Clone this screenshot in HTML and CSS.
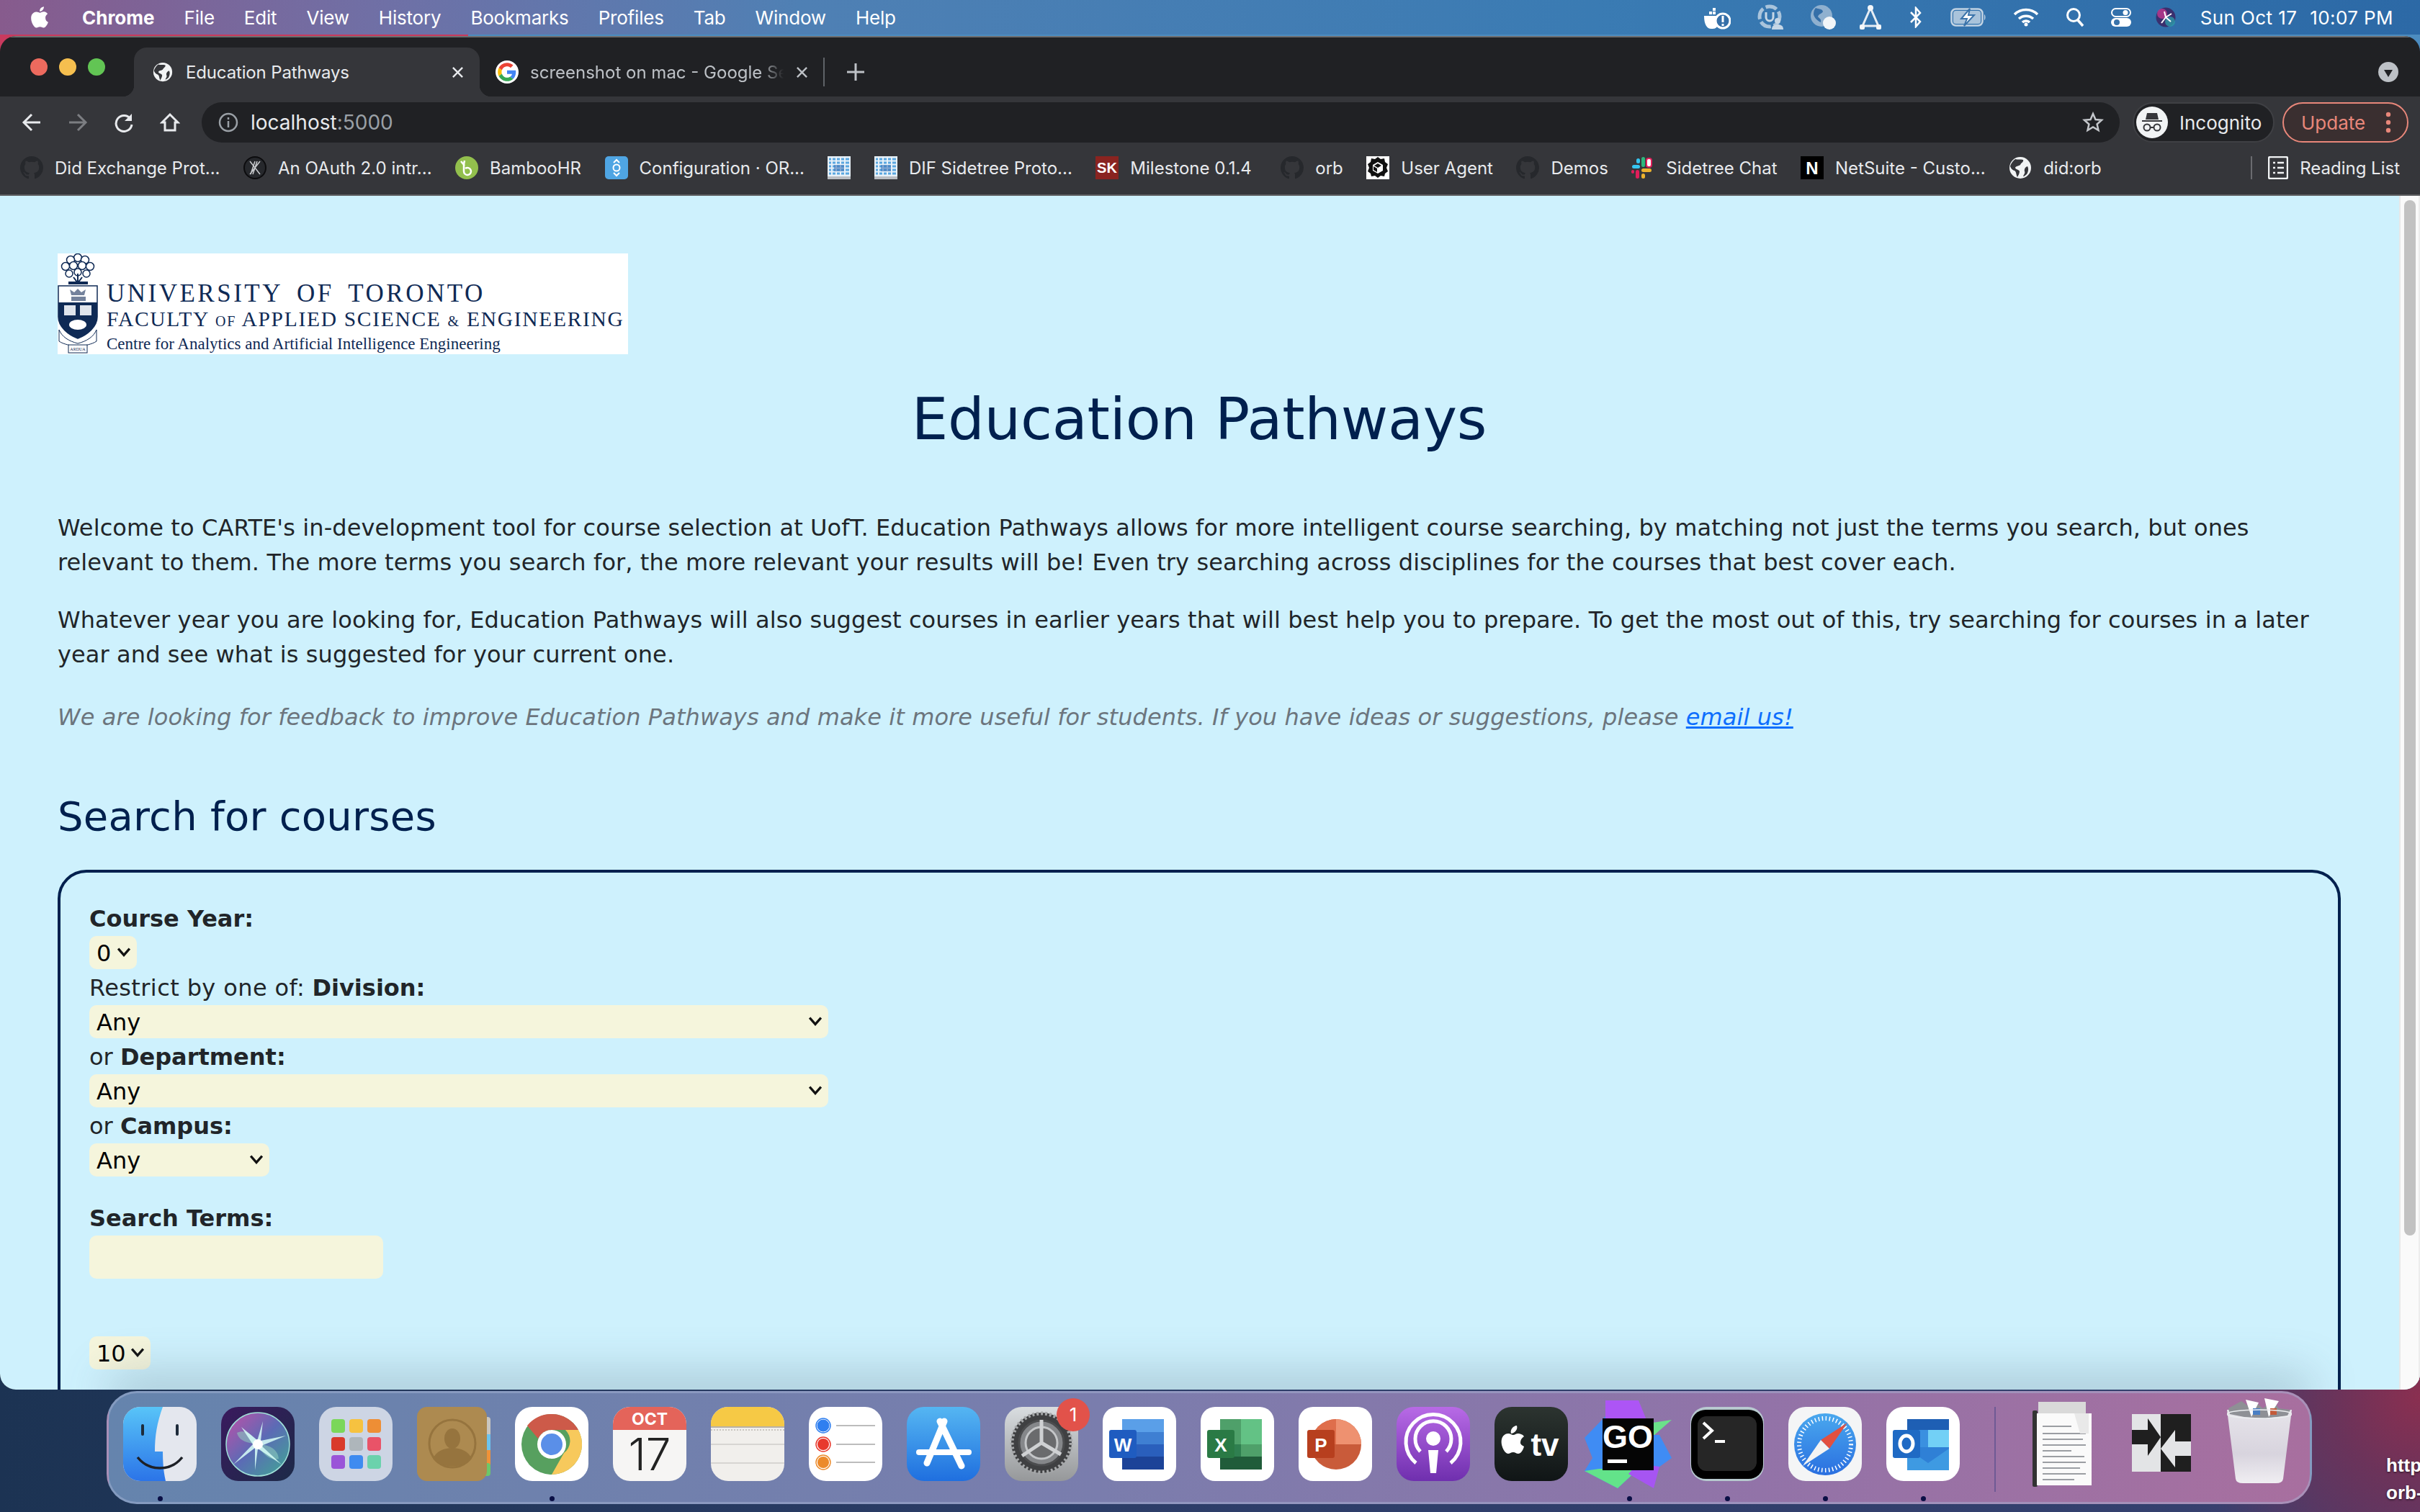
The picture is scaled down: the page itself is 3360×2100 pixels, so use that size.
FILE: index.html
```html
<!DOCTYPE html>
<html lang="en">
<head>
  <title>Education Pathways</title>
  <link rel="stylesheet" href="styles.css">
</head>
<body>
  <svg class="defs" width="0" height="0">
    <defs>
      <symbol id="octo" viewBox="0 0 16 16"><path d="M8 0C3.58 0 0 3.58 0 8c0 3.54 2.29 6.53 5.47 7.59.4.07.55-.17.55-.38 0-.19-.01-.82-.01-1.49-2.01.37-2.53-.49-2.69-.94-.09-.23-.48-.94-.82-1.13-.28-.15-.68-.52-.01-.53.63-.01 1.08.58 1.23.82.72 1.21 1.87.87 2.33.66.07-.52.28-.87.51-1.07-1.78-.2-3.64-.89-3.64-3.95 0-.87.31-1.59.82-2.15-.08-.2-.36-1.02.08-2.12 0 0 .67-.21 2.2.82.64-.18 1.32-.27 2-.27.68 0 1.36.09 2 .27 1.53-1.04 2.2-.82 2.2-.82.44 1.1.16 1.92.08 2.12.51.56.82 1.27.82 2.15 0 3.07-1.87 3.75-3.65 3.95.29.25.54.73.54 1.48 0 1.07-.01 1.93-.01 2.2 0 .21.15.46.55.38A8.013 8.013 0 0016 8c0-4.42-3.58-8-8-8z" fill="#26282c"/></symbol>
      <symbol id="globe" viewBox="0 0 32 32"><circle cx="16" cy="16" r="15" fill="#f1f3f4"/><path d="M9 4c3 1 8 0 11 1 1 3-3 4-4 7-2 2-6 1-7 4 1 3 5 2 6 5 0 3-2 6-3 8-2-3-1-7-4-9-3-1-5-3-6-6 1-4 4-8 7-10zM26 14c2 3 1 8-1 11-2 1-3 3-5 3 1-3 3-4 2-7-1-3 1-6 4-7z" fill="#35363a"/></symbol>
      <symbol id="sheet" viewBox="0 0 32 32"><rect width="32" height="32" fill="#e8f1f8"/><path d="M2 4h28M2 9h28M2 14h28M2 19h28M2 24h28" stroke="#5aa7e0" stroke-width="3"/><path d="M6 0v28M12 0v28M18 0v28M24 0v28" stroke="#e8f1f8" stroke-width="2"/><rect x="9" y="12" width="14" height="9" fill="#3d74b8" opacity=".6"/><rect y="28" width="32" height="4" fill="#b9bdc2"/></symbol>
      <linearGradient id="siriBg" x1="0" y1="0" x2="1" y2="1"><stop offset="0" stop-color="#3a1a5e"/><stop offset="1" stop-color="#1c2a48"/></linearGradient>
      <linearGradient id="siriBall" x1="0" y1="0" x2="1" y2="1"><stop offset="0" stop-color="#c24fa8"/><stop offset=".5" stop-color="#5b6bb5"/><stop offset="1" stop-color="#3fa893"/></linearGradient>
      <linearGradient id="finderL" x1="0" y1="0" x2="0" y2="1"><stop offset="0" stop-color="#58c4f8"/><stop offset="1" stop-color="#2b74e8"/></linearGradient>
      <linearGradient id="storeBg" x1="0" y1="0" x2="0" y2="1"><stop offset="0" stop-color="#55b6f2"/><stop offset="1" stop-color="#1f6fdf"/></linearGradient>
      <linearGradient id="gearBg" x1="0" y1="0" x2="0" y2="1"><stop offset="0" stop-color="#d9dde0"/><stop offset="1" stop-color="#96989a"/></linearGradient>
      <linearGradient id="podBg" x1="0" y1="0" x2="0" y2="1"><stop offset="0" stop-color="#b86ae6"/><stop offset="1" stop-color="#6f2fae"/></linearGradient>
      <linearGradient id="tvBg" x1="0" y1="0" x2="0" y2="1"><stop offset="0" stop-color="#2c3430"/><stop offset="1" stop-color="#101516"/></linearGradient>
      <linearGradient id="binBg" x1="0" y1="0" x2="0" y2="1"><stop offset="0" stop-color="#e6e4ea"/><stop offset=".6" stop-color="#d8d4de"/><stop offset="1" stop-color="#f0eef2"/></linearGradient>
      <linearGradient id="safariBg" x1="0" y1="0" x2="0" y2="1"><stop offset="0" stop-color="#4aa8ee"/><stop offset="1" stop-color="#2a6fe0"/></linearGradient>
    </defs>
  </svg>

  <!-- mac menu bar -->
  <header class="menubar">
    <nav class="menus">
      <svg class="apple" viewBox="0 0 24 28"><path d="M17 14.6c0-3 2.500-4.400 2.600-4.500-1.400-2.100-3.600-2.400-4.400-2.400-1.900-.2-3.600 1.100-4.600 1.100-.9 0-2.400-1.100-4-1-2 0-3.900 1.200-5 3-2.100 3.700-.5 9.200 1.500 12.200 1 1.500 2.200 3.100 3.800 3 1.500-.1 2.100-1 3.900-1 1.800 0 2.400 1 4 1 1.600 0 2.700-1.500 3.700-3 1.200-1.700 1.600-3.300 1.700-3.400-.1 0-3.200-1.200-3.200-5z M14 5.600c.8-1 1.400-2.400 1.200-3.800-1.200.1-2.600.8-3.500 1.800-.8.9-1.400 2.300-1.200 3.700 1.300.1 2.700-.7 3.500-1.700z" fill="#fff"/></svg>
      <b>Chrome</b>
      <span>File</span><span>Edit</span><span>View</span><span>History</span><span>Bookmarks</span><span>Profiles</span><span>Tab</span><span>Window</span><span>Help</span>
    </nav>
    <div class="status">
      <svg class="st st-docker" viewBox="0 0 38 36"><path d="M1 16h20c0 8 0 12-2 15-2 3-5 3-8 3-6 0-10-6-10-18zM8 10h4v4H8zM13 10h4v4h-4zM13 5h4v4h-4z" fill="#fff"/><circle cx="27" cy="23" r="10" fill="#356fa8" stroke="#fff" stroke-width="3"/><path d="M27 16v9M27 27v3" stroke="#fff" stroke-width="3"/></svg>
      <svg class="st st-up" viewBox="0 0 36 36"><circle cx="17" cy="17" r="14" fill="none" stroke="#a9c4dc" stroke-width="5" stroke-dasharray="16 4"/><path d="M12 11v7a5 5 0 0 0 10 0v-7" fill="none" stroke="#c6d7e6" stroke-width="3"/><circle cx="28" cy="23" r="4" fill="#c6d7e6"/><path d="M20 35c0-5 3-7 8-7s8 2 8 7z" fill="#c6d7e6"/></svg>
      <svg class="st st-net" viewBox="0 0 36 36"><circle cx="16" cy="16" r="15" fill="#8fb0cf"/><path d="M8 5c5 2 9 1 10 5-1 3-6 3-7 7 2 3 5 3 4 8-4-2-9-6-10-11 0-4 1-7 3-9z" fill="#356fa8"/><circle cx="27" cy="26" r="9" fill="#f2f5f8"/></svg>
      <svg class="st st-tri" viewBox="0 0 32 36"><path d="M16 5 5 30h22z" fill="none" stroke="#e6edf4" stroke-width="3"/><circle cx="16" cy="5" r="4" fill="#f4f7fa"/><rect x="1" y="28" width="7" height="7" rx="2" fill="#f4f7fa"/><rect x="24" y="28" width="7" height="7" rx="2" fill="#f4f7fa"/></svg>
      <svg class="st st-bt" viewBox="0 0 18 30"><path d="M2 8l13 13-6 7V2l6 7L2 22" fill="none" stroke="#fff" stroke-width="2.500"/></svg>
      <svg class="st st-batt" viewBox="0 0 50 26"><rect x="1.500" y="1.500" width="43" height="23" rx="6" fill="none" stroke="#c2d3e3" stroke-width="2.500"/><rect x="4" y="4" width="38" height="18" rx="3.500" fill="#a9c3db"/><path d="M47 9c2 1 2 7 0 8z" fill="#c2d3e3"/><path d="M27 1 15 15h8l-4 10 14-15h-8z" fill="#fff" stroke="#3a73aa" stroke-width="2"/></svg>
      <svg class="st st-wifi" viewBox="0 0 36 26"><path d="M2 9a23 23 0 0 1 32 0M8 15a15 15 0 0 1 20 0M13 20a7 7 0 0 1 10 0" fill="none" stroke="#fff" stroke-width="3.500"/><circle cx="18" cy="23" r="2.500" fill="#fff"/></svg>
      <svg class="st st-find" viewBox="0 0 26 28"><circle cx="11" cy="11" r="8.500" fill="none" stroke="#fff" stroke-width="3"/><path d="M17 18l7 8" stroke="#fff" stroke-width="3.500"/></svg>
      <svg class="st st-cc" viewBox="0 0 28 26"><rect x="1" y="1" width="26" height="11" rx="5.500" fill="none" stroke="#fff" stroke-width="2"/><circle cx="20" cy="6.500" r="3.500" fill="#fff"/><rect x="0" y="14" width="28" height="12" rx="6" fill="#fff"/><circle cx="8" cy="20" r="4" fill="#3a73aa"/></svg>
      <svg class="st st-siri" viewBox="0 0 28 28"><circle cx="14" cy="14" r="13.500" fill="#3a2f6e"/><circle cx="9" cy="9" r="7" fill="#c0398f" opacity=".8"/><circle cx="20" cy="20" r="7" fill="#2e9aa8" opacity=".8"/><path d="M14 14 8 22M14 14l8-5M14 14 12 6M14 14l7 6" stroke="#fff" stroke-width="2"/></svg>
      <span class="clock">Sun Oct 17</span>
      <span class="clock clock-time">10:07 PM</span>
    </div>
  </header>

  <!-- chrome window -->
  <main class="window">
    <div class="tabstrip">
      <div class="lights"><i class="red"></i><i class="yellow"></i><i class="green"></i></div>
      <div class="tab tab-active">
        <svg class="fav"><use href="#globe"/></svg>
        <span class="tab-title">Education Pathways</span>
        <svg class="tab-x" viewBox="0 0 18 18"><path d="M2 2l14 14M16 2 2 16" stroke="#e8eaed" stroke-width="2.500"/></svg>
      </div>
      <div class="tab tab-back">
        <svg class="fav" viewBox="-6 -6 60 60"><circle cx="24" cy="24" r="30" fill="#fff"/><path fill="#EA4335" d="M24 9.500c3.540 0 6.710 1.220 9.210 3.600l6.850-6.850C35.900 2.380 30.470 0 24 0 14.620 0 6.510 5.380 2.560 13.220l7.980 6.190C12.430 13.720 17.740 9.500 24 9.500z"/><path fill="#4285F4" d="M46.980 24.550c0-1.570-.15-3.090-.38-4.550H24v9.020h12.940c-.58 2.960-2.260 5.480-4.780 7.180l7.730 6c4.510-4.180 7.090-10.360 7.090-17.650z"/><path fill="#FBBC05" d="M10.530 28.590c-.48-1.450-.76-2.990-.76-4.590s.27-3.140.76-4.590l-7.980-6.190C.92 16.460 0 20.120 0 24c0 3.880.92 7.540 2.560 10.780l7.970-6.190z"/><path fill="#34A853" d="M24 48c6.480 0 11.930-2.130 15.890-5.810l-7.730-6c-2.150 1.450-4.920 2.300-8.160 2.300-6.260 0-11.570-4.220-13.470-9.910l-7.980 6.190C6.510 42.620 14.620 48 24 48z"/></svg>
        <span class="tab-title tab-fade">screenshot on mac - Google Se</span>
        <svg class="tab-x" viewBox="0 0 18 18"><path d="M2 2l14 14M16 2 2 16" stroke="#bdc1c6" stroke-width="2.500"/></svg>
      </div>
      <i class="tab-sep"></i>
      <svg class="plus" viewBox="0 0 24 24"><path d="M12 0v24M0 12h24" stroke="#bdc1c6" stroke-width="3"/></svg>
      <span class="tab-list"><svg viewBox="0 0 28 28"><circle cx="14" cy="14" r="14" fill="#bdc1c6"/><path d="M8 11h12l-6 10z" fill="#202124"/></svg></span>
    </div>

    <div class="toolbar">
      <svg class="nav" viewBox="0 0 28 28"><path d="M26 14H4M14 3 3 14l11 11" fill="none" stroke="#e8eaed" stroke-width="3"/></svg>
      <svg class="nav" viewBox="0 0 28 28"><path d="M2 14h22M14 3l11 11-11 11" fill="none" stroke="#7c7e82" stroke-width="3"/></svg>
      <svg class="nav" viewBox="0 0 28 28"><path d="M23 9a11 11 0 1 0 2 8" fill="none" stroke="#e8eaed" stroke-width="3"/><path d="M25 2v10H15z" fill="#e8eaed"/></svg>
      <svg class="nav" viewBox="0 0 28 28"><path d="M14 3 3 14h4v11h14V14h4z" fill="none" stroke="#e8eaed" stroke-width="3"/></svg>
      <div class="omnibox">
        <svg class="info" viewBox="0 0 28 28"><circle cx="14" cy="14" r="12" fill="none" stroke="#9aa0a6" stroke-width="2.500"/><path d="M14 12v9M14 7v3" stroke="#9aa0a6" stroke-width="2.500"/></svg>
        <span class="url">localhost<span class="url-port">:5000</span></span>
        <svg class="star" viewBox="0 0 30 30"><path d="M15 3l3.500 8 8.500.8-6.400 5.700 1.900 8.500L15 21.500 7.500 26l1.900-8.500L3 11.800l8.500-.8z" fill="none" stroke="#c4c7cb" stroke-width="2.500"/></svg>
      </div>
      <div class="incognito">
        <svg class="avatar" viewBox="0 0 44 44"><circle cx="22" cy="22" r="22" fill="#f1f3f4"/><path d="M15 9h14l2 9H13zM8 19h28v2H8z" fill="#35363a"/><circle cx="15" cy="29" r="4.500" fill="none" stroke="#35363a" stroke-width="2"/><circle cx="29" cy="29" r="4.500" fill="none" stroke="#35363a" stroke-width="2"/><path d="M19 29h6" stroke="#35363a" stroke-width="2"/></svg>
        <span>Incognito</span>
      </div>
      <div class="update">
        <span>Update</span>
        <svg class="dots" viewBox="0 0 8 30"><circle cx="4" cy="4" r="3.200"/><circle cx="4" cy="15" r="3.200"/><circle cx="4" cy="26" r="3.200"/></svg>
      </div>
    </div>

    <div class="bookmarks">
      <a class="mark"><svg><use href="#octo"/></svg>Did Exchange Prot...</a>
      <a class="mark"><svg viewBox="0 0 32 32"><circle cx="16" cy="16" r="15" fill="#26282c" stroke="#0c0c0e" stroke-width="2"/><path d="M9 7l14 18M16 7l-6 18M19 7l-6 18M23 7 9 25" stroke="#c9cbce" stroke-width="1.500"/></svg>An OAuth 2.0 intr...</a>
      <a class="mark"><svg viewBox="0 0 32 32"><circle cx="16" cy="16" r="16" fill="#92bf4d"/><path d="M12 12v9a5 5 0 1 0 2-4M8 7l5 6M13 6l-1 5" fill="none" stroke="#fff" stroke-width="2.500"/></svg>BambooHR</a>
      <a class="mark"><svg viewBox="0 0 32 32"><rect width="32" height="32" rx="5" fill="#4fa5e3"/><circle cx="16" cy="16" r="4.500" fill="none" stroke="#fff" stroke-width="2"/><path d="M12 9l4-4 4 4M12 23l4 4 4-4" fill="none" stroke="#fff" stroke-width="2"/></svg>Configuration · OR...</a>
      <a class="mark"><svg><use href="#sheet"/></svg></a>
      <a class="mark"><svg><use href="#sheet"/></svg>DIF Sidetree Proto...</a>
      <a class="mark"><svg viewBox="0 0 32 32"><rect width="32" height="32" fill="#8a2420"/><text x="16" y="23" class="sk">SK</text></svg>Milestone 0.1.4</a>
      <a class="mark mark-wide"><svg><use href="#octo"/></svg>orb</a>
      <a class="mark"><svg viewBox="0 0 32 32"><rect width="32" height="32" fill="#fff"/><path d="M16 1l4 3 5-1 1 5 4 3-2 5 2 5-4 3-1 4-5-1-4 3-4-3-5 1-1-4-4-3 2-5-2-5 4-3 1-5 5 1z" fill="#111"/><path d="M16 8l7 4v8l-7 4-7-4v-8z" fill="#fff"/><path d="M16 10l5 3-5 3-5-3zM15 17v5l-5-3v-5z" fill="#111"/></svg>User Agent</a>
      <a class="mark"><svg><use href="#octo"/></svg>Demos</a>
      <a class="mark"><svg viewBox="0 0 32 32"><rect x="1" y="12" width="11" height="5" rx="2.500" fill="#36c5f0"/><rect x="7" y="3" width="5" height="7" rx="2.500" fill="#36c5f0"/><rect x="14" y="1" width="5" height="14" rx="2.500" fill="#2eb67d"/><rect x="21" y="3" width="7" height="12" rx="3" fill="#fff" stroke="#e01e5a" stroke-width="2"/><rect x="14" y="17" width="14" height="5" rx="2.500" fill="#ecb22e"/><rect x="14" y="24" width="5" height="7" rx="2.500" fill="#ecb22e"/><rect x="6" y="19" width="5" height="12" rx="2.500" fill="#e01e5a"/><rect x="0" y="19" width="4" height="5" rx="2" fill="#e01e5a"/></svg>Sidetree Chat</a>
      <a class="mark"><svg viewBox="0 0 32 32"><rect width="32" height="32" fill="#000"/><text x="16" y="25" class="nt">N</text></svg>NetSuite - Custo...</a>
      <a class="mark"><svg><use href="#globe"/></svg>did:orb</a>
      <i class="mark-sep"></i>
      <a class="mark reading"><svg viewBox="0 0 28 32"><rect x="1" y="1" width="26" height="30" rx="2" fill="#35363a" stroke="#f1f3f4" stroke-width="2.500"/><path d="M7 9h3M7 16h3M7 23h3M13 9h9M13 16h9M13 23h9" stroke="#f1f3f4" stroke-width="2.500"/></svg>Reading List</a>
    </div>

    <div class="viewport">
      <div class="page">
        <div class="logo">
          <svg class="crest" viewBox="0 0 58 140">
            <g fill="#fff" stroke="#0f2a55" stroke-width="1.500">
              <circle cx="28" cy="6" r="5.500"/><circle cx="18" cy="9" r="5.500"/><circle cx="38" cy="9" r="5.500"/><circle cx="11" cy="18" r="5.500"/><circle cx="22" cy="17" r="5.500"/><circle cx="34" cy="17" r="5.500"/><circle cx="45" cy="18" r="5.500"/><circle cx="16" cy="28" r="5"/><circle cx="28" cy="26" r="5"/><circle cx="40" cy="28" r="5"/>
            </g>
            <path d="M28 28v12M22 33l6 8 6-8" stroke="#0f2a55" stroke-width="2" fill="none"/>
            <rect x="15" y="39" width="27" height="4" fill="#0f2a55"/>
            <path d="M1 45h54v43c0 14-14 25-27 30C15 113 1 102 1 88z" fill="#fff" stroke="#0f2a55" stroke-width="1.500"/>
            <path d="M1 68h54v20c0 14-14 25-27 30C15 113 1 102 1 88z" fill="#0f2a55"/>
            <path d="M19 58l-2-8 6 4 5-5 5 5 6-4-2 8zM19 60h20v6H19z" fill="#74829c"/>
            <rect x="9" y="72" width="16" height="14" fill="#dfe4ec"/><rect x="31" y="72" width="16" height="14" fill="#dfe4ec"/>
            <ellipse cx="28" cy="99" rx="12" ry="7" fill="#fff"/>
            <path d="M2 106c4 10 14 16 26 19 12-3 22-9 26-19v16c-6 4-16 6-26 8-10-2-20-4-26-8z" fill="#fff" stroke="#0f2a55"/>
            <rect x="15" y="127" width="26" height="11" fill="#fff" stroke="#0f2a55"/>
            <text x="28" y="135" class="crest-motto">ARDUA</text>
          </svg>
          <div class="logo-text">
            <div class="logo-uni">UNIVERSITY OF TORONTO</div>
            <div class="logo-fac">FACULTY <small>OF</small> APPLIED SCIENCE <small>&amp;</small> ENGINEERING</div>
            <div class="logo-cen">Centre for Analytics and Artificial Intelligence Engineering</div>
          </div>
        </div>

        <h1>Education Pathways</h1>
        <p>Welcome to CARTE's in-development tool for course selection at UofT. Education Pathways allows for more intelligent course searching, by matching not just the terms you search, but ones relevant to them. The more terms you search for, the more relevant your results will be! Even try searching across disciplines for the courses that best cover each.</p>
        <p>Whatever year you are looking for, Education Pathways will also suggest courses in earlier years that will best help you to prepare. To get the most out of this, try searching for courses in a later year and see what is suggested for your current one.</p>
        <p class="feedback">We are looking for feedback to improve Education Pathways and make it more useful for students. If you have ideas or suggestions, please <a href="#">email us!</a></p>

        <h2>Search for courses</h2>
        <form class="search-box">
          <div class="line"><b>Course Year:</b></div>
          <div class="line"><span class="pick"><select class="sel-year"><option>0</option></select><svg class="chev" viewBox="0 0 16 12"><path d="M1 2l7 8 7-8" /></svg></span></div>
          <div class="line"><span class="restrict">Restrict by one of:</span> <b>Division:</b></div>
          <div class="line"><span class="pick"><select class="sel-wide"><option>Any</option></select><svg class="chev" viewBox="0 0 16 12"><path d="M1 2l7 8 7-8" /></svg></span></div>
          <div class="line">or <b>Department:</b></div>
          <div class="line"><span class="pick"><select class="sel-wide"><option>Any</option></select><svg class="chev" viewBox="0 0 16 12"><path d="M1 2l7 8 7-8" /></svg></span></div>
          <div class="line">or <b>Campus:</b></div>
          <div class="line"><span class="pick"><select class="sel-campus"><option>Any</option></select><svg class="chev" viewBox="0 0 16 12"><path d="M1 2l7 8 7-8" /></svg></span></div>
          <div class="line terms-label"><b>Search Terms:</b></div>
          <input class="terms" type="text">
          <div class="line size-row"><span class="pick"><select class="sel-size"><option>10</option></select><svg class="chev" viewBox="0 0 16 12"><path d="M1 2l7 8 7-8" /></svg></span></div>
        </form>
      </div>
      <div class="scrollbar"><i class="thumb"></i></div>
      <i class="dock-shadow"></i>
    </div>
  </main>

  <!-- dock -->
  <footer class="dock">
    <div class="app"><svg viewBox="0 0 102 103"><rect width="102" height="103" rx="24" fill="#e4e7ee"/><path d="M24 0h31c-8 22-11 40-11 62h11c0 15 1 28 4 41H24A24 24 0 0 1 0 79V24A24 24 0 0 1 24 0z" fill="url(#finderL)"/><path d="M27 26v12M75 26v12" stroke="#1d2b3a" stroke-width="4" stroke-linecap="round"/><path d="M20 70c16 20 46 20 62 0" fill="none" stroke="#1d2026" stroke-width="3.500"/></svg><i class="dot"></i></div>
    <div class="app"><svg viewBox="0 0 102 103"><rect width="102" height="103" rx="24" fill="url(#siriBg)"/><circle cx="51" cy="52" r="44" fill="url(#siriBall)" stroke="#9fe0d8" stroke-width="1.500"/><path d="M22 36c12-6 24 4 29 16-14-2-26-4-29-16zM80 72c-12 4-24-8-29-20 14 0 28 6 29 20z" fill="#8fd0c0" opacity=".55"/><path d="M51 44 58 20 55 47 90 40 56 54 84 80 51 58 47 88 47 57 17 80 44 52 28 28 50 46z" fill="#d8fff8" opacity=".85"/><circle cx="51" cy="52" r="7" fill="#fff"/></svg></div>
    <div class="app"><svg viewBox="0 0 102 103"><rect width="102" height="103" rx="24" fill="#cdd5e4"/><rect x="17" y="17" width="19" height="19" rx="4" fill="#7bd75a"/><rect x="42" y="17" width="19" height="19" rx="4" fill="#f6c240"/><rect x="67" y="17" width="19" height="19" rx="4" fill="#ee8e35"/><rect x="17" y="42" width="19" height="19" rx="4" fill="#d93a2b"/><rect x="42" y="42" width="19" height="19" rx="4" fill="#aeb6bb"/><rect x="67" y="42" width="19" height="19" rx="4" fill="#e95368"/><rect x="17" y="67" width="19" height="19" rx="4" fill="#9a55d8"/><rect x="42" y="67" width="19" height="19" rx="4" fill="#3f8bf0"/><rect x="67" y="67" width="19" height="19" rx="4" fill="#6bd2ac"/></svg></div>
    <div class="app"><svg viewBox="0 0 102 103"><rect x="88" y="14" width="14" height="28" rx="4" fill="#c9c6c0"/><rect x="88" y="38" width="14" height="24" fill="#6cc4ef"/><rect x="88" y="60" width="14" height="22" fill="#ef9238"/><rect x="88" y="78" width="14" height="18" rx="4" fill="#6cc76a"/><rect width="97" height="103" rx="14" fill="#ad8a50"/><ellipse cx="49" cy="51" rx="32" ry="33" fill="none" stroke="#96743e" stroke-width="3"/><ellipse cx="49" cy="44" rx="11" ry="14" fill="#96743e"/><path d="M22 72c8-20 46-20 54 0-12 14-42 14-54 0z" fill="#96743e"/></svg></div>
    <div class="app"><svg viewBox="0 0 102 103"><rect width="102" height="103" rx="24" fill="#fff"/><circle cx="51" cy="52" r="42" fill="#57a05f"/><path d="M51 10a42 42 0 0 1 37 22H51a21 21 0 0 0-19 12L17 26a42 42 0 0 1 34-16z" fill="#cd5a49"/><path d="M88 32a42 42 0 0 1-37 62l17-30a21 21 0 0 0 2-32z" fill="#f7c95c"/><circle cx="51" cy="52" r="20" fill="#fff"/><circle cx="51" cy="52" r="15" fill="#5a8fe8"/></svg><i class="dot"></i></div>
    <div class="app"><svg viewBox="0 0 102 103"><rect width="102" height="103" rx="24" fill="#f6f5f4"/><path d="M0 32V24A24 24 0 0 1 24 0h54a24 24 0 0 1 24 24v8z" fill="#e4645a"/><text x="51" y="25" class="cal-month">OCT</text><text x="51" y="88" class="cal-day">17</text></svg></div>
    <div class="app"><svg viewBox="0 0 102 103"><rect width="102" height="103" rx="24" fill="#f1efec"/><path d="M0 26A24 24 0 0 1 24 0h54a24 24 0 0 1 24 24v3H0z" fill="#f6c945"/><path d="M0 28h102" stroke="#b8b2a6" stroke-width="2"/><path d="M0 32h102" stroke="#c9c6c0" stroke-width="2" stroke-dasharray="2 2"/><path d="M0 52h102M0 78h102" stroke="#d7d5d2" stroke-width="2"/></svg></div>
    <div class="app"><svg viewBox="0 0 102 103"><rect width="102" height="103" rx="24" fill="#fff"/><circle cx="20" cy="26" r="8" fill="#2f7ff0" stroke="#2f7ff0"/><circle cx="20" cy="26" r="10" fill="none" stroke="#2f7ff0" stroke-width="1.500"/><circle cx="20" cy="52" r="8" fill="#e8392d"/><circle cx="20" cy="52" r="10" fill="none" stroke="#e8392d" stroke-width="1.500"/><circle cx="20" cy="77" r="8" fill="#ec8a2a"/><circle cx="20" cy="77" r="10" fill="none" stroke="#ec8a2a" stroke-width="1.500"/><path d="M38 26h54M38 52h54M38 77h54" stroke="#bcbcbc" stroke-width="2"/></svg></div>
    <div class="app"><svg viewBox="0 0 102 103"><rect width="102" height="103" rx="24" fill="url(#storeBg)"/><g stroke="#fff" stroke-width="9" stroke-linecap="round"><path d="M52 20 28 78M46 20l30 62"/><path d="M17 63h69" stroke-width="8"/></g></svg></div>
    <div class="app"><svg viewBox="0 0 102 103"><rect width="102" height="103" rx="24" fill="url(#gearBg)"/><circle cx="51" cy="50" r="42" fill="#3f4042"/><circle cx="51" cy="50" r="41" fill="none" stroke="#a6a8aa" stroke-width="5" stroke-dasharray="3 3"/><circle cx="51" cy="50" r="31" fill="#85878a" stroke="#4b4c4e" stroke-width="3"/><circle cx="51" cy="50" r="22" fill="#6a6b6d" stroke="#c4c6c8" stroke-width="3"/><path d="M51 50V18M51 50 24 68M51 50l27 16" stroke="#cfd1d3" stroke-width="5"/></svg><span class="badge">1</span></div>
    <div class="app"><svg viewBox="0 0 102 103"><rect width="102" height="103" rx="20" fill="#fff"/><rect x="27" y="17" width="58" height="35" fill="#5a9fe8"/><rect x="27" y="35" width="58" height="18" fill="#3f7fd2"/><rect x="27" y="52" width="58" height="18" fill="#2a5fbc"/><rect x="27" y="69" width="58" height="18" fill="#1c4398"/><rect x="9" y="32" width="38" height="39" rx="3" fill="#1f5cc0"/><text x="28" y="62" class="ms-letter">W</text></svg></div>
    <div class="app"><svg viewBox="0 0 102 103"><rect width="102" height="103" rx="20" fill="#fff"/><rect x="27" y="17" width="29" height="70" fill="#4fa06a"/><rect x="56" y="17" width="29" height="35" fill="#63c285"/><rect x="56" y="52" width="29" height="18" fill="#4fa06a"/><rect x="27" y="52" width="29" height="18" fill="#2f7f50"/><rect x="27" y="69" width="58" height="18" fill="#205c3a"/><rect x="9" y="32" width="38" height="39" rx="3" fill="#2a7a45"/><text x="28" y="62" class="ms-letter">X</text></svg></div>
    <div class="app"><svg viewBox="0 0 102 103"><rect width="102" height="103" rx="20" fill="#fff"/><circle cx="52" cy="52" r="35" fill="#c95b3a"/><path d="M52 17a35 35 0 0 1 35 35H52z" fill="#ee9170"/><path d="M52 17a35 35 0 0 0-35 35h35z" fill="#df6e4b"/><rect x="12" y="32" width="38" height="39" rx="3" fill="#b73f1e"/><text x="31" y="62" class="ms-letter">P</text></svg></div>
    <div class="app"><svg viewBox="0 0 102 103"><rect width="102" height="103" rx="24" fill="url(#podBg)"/><g fill="none" stroke="#fff"><path d="M27 78a38 38 0 1 1 48 0" stroke-width="5"/><path d="M33 62a25 25 0 1 1 36 0" stroke-width="5"/></g><circle cx="51" cy="44" r="10" fill="#fff"/><path d="M44 60h14l-3 32h-8z" fill="#fff"/></svg></div>
    <div class="app"><svg viewBox="0 0 102 103"><rect width="102" height="103" rx="24" fill="url(#tvBg)"/><path d="M36 50c0-6 4-8 5-9-2-3-6-4-8-4-3 0-5 2-7 2s-4-2-7-2c-4 0-8 3-9 8-2 8 4 20 9 20 2 0 4-2 7-2s4 2 7 2c4 0 7-6 8-10-2-1-5-3-5-5zM29 34c2-2 3-5 2-8-3 0-5 2-6 3-2 2-3 5-2 8 2 0 4-1 6-3z" fill="#fff"/><text x="70" y="68" class="tv-word">tv</text></svg></div>
    <div class="app app-go"><svg viewBox="0 0 122 122">
      <path d="M29 0h46l11 27H29z" fill="#ad55f5"/>
      <path d="M29 22 0 52l11 28-11 18 46 24 29-27V27H29z" fill="#3f8cf4"/>
      <path d="M0 98l46 24 29-27H20z" fill="#63e38a"/>
      <path d="M121 27 89 55 68 35z" fill="#6be28a"/>
      <path d="M104 48l17 32-25 18H70V48z" fill="#3f8cf4"/>
      <path d="M61 102l35 20 8-30-30-4z" fill="#a655f2"/>
      <rect x="25" y="25" width="71" height="72" fill="#050505"/>
      <text x="60" y="66" class="go-word">GO</text>
      <rect x="32" y="82" width="27" height="5" fill="#fff"/>
    </svg><i class="dot"></i></div>
    <div class="app"><svg viewBox="0 0 102 103"><rect width="102" height="103" rx="22" fill="#b7c9cf"/><rect x="1" y="4" width="100" height="96" rx="20" fill="#000"/><rect x="10" y="13" width="82" height="76" rx="12" fill="#262626"/><path d="M18 22l12 11-12 11" fill="none" stroke="#fff" stroke-width="4"/><rect x="34" y="46" width="14" height="4" fill="#fff"/></svg><i class="dot"></i></div>
    <div class="app"><svg viewBox="0 0 102 103"><rect width="102" height="103" rx="24" fill="#f4f5f6"/><circle cx="51" cy="52" r="43" fill="url(#safariBg)"/><circle cx="51" cy="52" r="36" fill="none" stroke="#fff" stroke-width="6" stroke-dasharray="1.500 3.500"/><path d="M82 22 57 58 45 46z" fill="#e25040"/><path d="M20 82l25-36 12 12z" fill="#f3f3f3"/></svg><i class="dot"></i></div>
    <div class="app"><svg viewBox="0 0 102 103"><rect width="102" height="103" rx="24" fill="#fff"/><rect x="29" y="17" width="58" height="26" fill="#1e5fb4"/><rect x="29" y="32" width="29" height="24" fill="#3a90e0"/><rect x="58" y="32" width="29" height="24" fill="#72d0f6"/><rect x="29" y="56" width="58" height="32" fill="#2f80d6"/><path d="M29 58l29 20 29-20v30H29z" fill="#3e9ae2"/><rect x="9" y="32" width="38" height="39" rx="3" fill="#1f6ac4"/><ellipse cx="28" cy="51" rx="9" ry="11" fill="none" stroke="#fff" stroke-width="5"/></svg><i class="dot"></i></div>
    <i class="dock-sep"></i>
    <div class="app app-doc"><svg viewBox="0 0 82 118"><rect x="0" y="12" width="7" height="106" rx="2" fill="#333"/><rect x="8" y="0" width="66" height="50" fill="#d9d9d9"/><path d="M6 16h76v100H6z" fill="#fafafa"/><path d="M14 34h40M14 44h60M14 52h56M14 60h60M14 68h40M14 76h58M14 84h60M14 92h52M14 100h60M14 108h44" stroke="#9b9ea3" stroke-width="2"/><path d="M58 16h20v28H66z" fill="#e9e9e9"/></svg></div>
    <div class="app app-diff"><svg viewBox="0 0 82 80"><rect width="40" height="80" fill="#e3e4e6"/><rect x="40" width="42" height="80" fill="#1f1f1f"/><path d="M0 22h22V6l18 26-18 26V42H0z" fill="#1f1f1f"/><path d="M82 38H60V22L40 48l20 26V58h22z" fill="#e3e4e6"/></svg></div>
    <div class="app app-bin"><svg viewBox="0 0 90 118"><path d="M0 16h90l-12 96q-1 6-10 6H22q-9 0-10-6z" fill="url(#binBg)"/><path d="M2 14 20 4l8 6 10-6 12 10 14-10 8 10 16 2-4 8-30 4-30-2-20-4z" fill="#8e9095"/><path d="M26 2l8 24 10-20zM52 0l6 26 14-22z" fill="#fff"/><rect x="36" y="14" width="10" height="9" fill="#4a7fc4"/><rect x="60" y="14" width="9" height="9" fill="#c45a3a"/><ellipse cx="45" cy="22" rx="45" ry="6" fill="none" stroke="#eceef0" stroke-width="1.500"/></svg></div>
  </footer>
  <div class="desk-file">http<br>orb-</div>
</body>
</html>
```

FILE: styles.css
```css
/* desktop */
html, body {
  margin: 0;
  padding: 0;
  width: 3360px;
  height: 2100px;
  overflow: hidden;
}

body {
  display: flex;
  flex-direction: column;
  position: relative;
  font-family: "DejaVu Sans", Verdana, sans-serif;
  background:
    linear-gradient(90deg, #c93a5e 0 650px, #4c8cc0 650px) 0 48px / 100% 30px no-repeat,
    radial-gradient(circle at 3360px 1940px, #8a2f50 0, rgba(122, 47, 82, 0.7) 120px, rgba(122, 47, 82, 0) 320px),
    linear-gradient(90deg, #1c3353 0%, #2c3d68 45%, #34406e 90%, #4d3c6e 100%);
}

.defs {
  position: absolute;
}

/* menu bar */
.menubar {
  height: 48px;
  margin-bottom: 2px;
  flex: none;
  display: flex;
  align-items: center;
  justify-content: space-between;
  padding: 0 37px 0 42px;
  color: #fff;
  font-family: Inter, "Liberation Sans", sans-serif;
  font-size: 26px;
  background: linear-gradient(90deg, #875b8d 0%, #6f70a6 16%, #4f80b4 33%, #3a7bb3 66%, #2c69a6 100%);
}

.menus {
  display: flex;
  align-items: center;
  gap: 41px;
}

.apple {
  width: 30px;
  height: 34px;
  margin-right: 1px;
}

.menus b {
  font-weight: 700;
}

.menus span {
  letter-spacing: -0.2px;
}

.status {
  display: flex;
  align-items: center;
}

.st { flex: none; }
.st-docker { width: 38px; height: 36px; margin-right: 37px; }
.st-up { width: 36px; height: 36px; margin-right: 37px; }
.st-net { width: 36px; height: 36px; margin-right: 32px; }
.st-tri { width: 32px; height: 36px; margin-right: 38px; }
.st-bt { width: 18px; height: 30px; margin-right: 39px; }
.st-batt { width: 50px; height: 26px; margin-right: 37px; }
.st-wifi { width: 36px; height: 26px; margin-right: 37px; }
.st-find { width: 26px; height: 28px; margin-right: 37px; }
.st-cc { width: 28px; height: 26px; margin-right: 34px; }
.st-siri { width: 28px; height: 28px; margin-right: 34px; }

.clock {
  white-space: nowrap;
  letter-spacing: 0.4px;
}

.clock-time {
  margin-left: 18px;
}

/* browser window */
.window {
  height: 1880px;
  flex: none;
  display: flex;
  flex-direction: column;
  position: relative;
  overflow: hidden;
  border-radius: 22px;
  background: #202124;
  font-family: Inter, "Liberation Sans", sans-serif;
}

.tabstrip {
  height: 84px;
  flex: none;
  display: flex;
  align-items: flex-end;
  border-top: 2px solid #6d6e70;
  box-sizing: border-box;
}

.lights {
  width: 186px;
  height: 82px;
  flex: none;
  display: flex;
  align-items: center;
  gap: 16px;
  padding: 0 0 0 42px;
  box-sizing: border-box;
}

.lights i {
  width: 24px;
  height: 24px;
  border-radius: 50%;
}

.red { background: #ed6a5e; }
.yellow { background: #f5bf4f; }
.green { background: #62c554; }

.tab {
  width: 478px;
  height: 68px;
  flex: none;
  display: flex;
  align-items: center;
  box-sizing: border-box;
  padding: 0 22px 0 26px;
  color: #bdc1c6;
  font-size: 24px;
}

.tab-active {
  position: relative;
  width: 480px;
  background: #35363a;
  border-radius: 18px 18px 0 0;
  color: #e8eaed;
  letter-spacing: -0.15px;
}

.tab-active::before,
.tab-active::after {
  content: "";
  position: absolute;
  bottom: 0;
  width: 16px;
  height: 16px;
}

.tab-active::before {
  left: -16px;
  background: radial-gradient(circle at 0 0, transparent 16px, #35363a 16.5px);
}

.tab-active::after {
  right: -16px;
  background: radial-gradient(circle at 100% 0, transparent 16px, #35363a 16.5px);
}

.fav {
  width: 28px;
  height: 28px;
  flex: none;
  margin-right: 18px;
}

.tab-back {
  padding-left: 22px;
}

.tab-back .fav {
  width: 32px;
  height: 32px;
  margin-right: 16px;
}

.tab-back .tab-x {
  margin-left: 6px;
}

.tab-title {
  flex: 1;
  overflow: hidden;
  white-space: nowrap;
}

.tab-fade {
  -webkit-mask-image: linear-gradient(90deg, #000 88%, transparent 97%);
  mask-image: linear-gradient(90deg, #000 88%, transparent 97%);
}

.tab-x {
  width: 17px;
  height: 17px;
  flex: none;
  margin-left: 18px;
}

.tab-sep {
  width: 2px;
  height: 40px;
  flex: none;
  margin: 0 0 14px -1px;
  background: #5f6368;
}

.plus {
  width: 24px;
  height: 24px;
  flex: none;
  margin: 0 0 22px 31px;
}

.tab-list {
  margin: 0 30px 20px auto;
  display: flex;
}

.tab-list svg {
  width: 28px;
  height: 28px;
}

/* toolbar */
.toolbar {
  height: 64px;
  flex: none;
  display: flex;
  align-items: flex-start;
  box-sizing: border-box;
  padding: 8px 16px 0 30px;
  background: #35363a;
}

.nav {
  width: 28px;
  height: 28px;
  flex: none;
  margin: 14px 36px 0 0;
}

.omnibox {
  flex: 1;
  height: 56px;
  display: flex;
  align-items: center;
  margin-left: -6px;
  padding: 0 22px 0 23px;
  border-radius: 28px;
  background: #202124;
  font-size: 28px;
}

.info {
  width: 28px;
  height: 28px;
  flex: none;
  margin-right: 17px;
}

.url {
  flex: 1;
  color: #e8eaed;
}

.url-port {
  color: #9aa0a6;
}

.star {
  width: 30px;
  height: 30px;
}

.incognito {
  width: 197px;
  height: 56px;
  flex: none;
  display: flex;
  align-items: center;
  box-sizing: border-box;
  margin-left: 18px;
  padding-left: 3px;
  border: 2px solid #3f4044;
  border-radius: 28px;
  background: #202124;
  color: #e8eaed;
  font-size: 26px;
}

.avatar {
  width: 44px;
  height: 44px;
  margin-right: 16px;
}

.update {
  width: 175px;
  height: 56px;
  flex: none;
  display: flex;
  align-items: center;
  justify-content: space-between;
  box-sizing: border-box;
  margin-left: 11px;
  padding: 0 22px 0 24px;
  border: 2px solid #e8877a;
  border-radius: 28px;
  background: #3a2f30;
  color: #e8877a;
  font-size: 26px;
}

.dots {
  width: 8px;
  height: 30px;
  fill: #e8877a;
}

/* bookmarks bar */
.bookmarks {
  height: 74px;
  flex: none;
  display: flex;
  align-items: center;
  gap: 32.500px;
  box-sizing: border-box;
  padding: 0 28px 2px;
  border-bottom: 2px solid #5f6062;
  background: #35363a;
  color: #e8eaed;
  font-size: 24px;
}

.mark {
  display: flex;
  align-items: center;
  gap: 16px;
  white-space: nowrap;
}

.mark svg {
  width: 32px;
  height: 32px;
  flex: none;
}

.mark-wide {
  margin-left: 8px;
}

.mark-sep {
  width: 2px;
  height: 32px;
  margin-left: auto;
  background: #6a6b6f;
}

.reading {
  margin-left: -10px;
}

.reading svg {
  width: 28px;
}

.sk {
  font: 700 20px "Liberation Sans", sans-serif;
  text-anchor: middle;
  fill: #fff;
}

.nt {
  font: 700 24px "Liberation Sans", sans-serif;
  text-anchor: middle;
  fill: #fff;
}

/* page */
.viewport {
  flex: 1;
  display: flex;
  min-height: 0;
  position: relative;
  overflow: hidden;
  background: #cef1fd;
}

.page {
  flex: 1;
  box-sizing: border-box;
  padding: 80px 81px 0 80px;
  color: #212529;
  font-family: "DejaVu Sans", Verdana, sans-serif;
  font-size: 32px;
  line-height: 48px;
}

.logo {
  width: 792px;
  height: 140px;
  display: flex;
  overflow: hidden;
  background: #fff;
  color: #0f2a55;
  font-family: "Liberation Serif", serif;
}

.crest {
  width: 58px;
  height: 140px;
  flex: none;
}

.logo-text {
  margin-left: 10px;
  white-space: nowrap;
}

.logo-uni {
  margin-top: 38px;
  font-size: 35px;
  line-height: 36px;
  letter-spacing: 3.500px;
  word-spacing: 8px;
}

.logo-fac {
  margin-top: 1px;
  font-size: 29.500px;
  line-height: 32px;
  letter-spacing: 1.700px;
}

.logo-fac small {
  font-size: 20px;
}

.logo-cen {
  font-size: 23px;
  line-height: 31px;
  letter-spacing: 0;
}

.crest-motto {
  font: 6px "Liberation Serif", serif;
  text-anchor: middle;
  fill: #0f2a55;
}

h1 {
  margin: 43px 0 78px;
  color: #00204e;
  font-size: 80px;
  font-weight: 400;
  line-height: 96px;
  text-align: center;
  letter-spacing: -0.250px;
}

p {
  margin: 0 0 32px;
  letter-spacing: 0.100px;
}

.feedback {
  margin: 39px 0 0;
  color: #6c757d;
  font-style: italic;
  letter-spacing: 0.090px;
}

.feedback a {
  color: #0d6efd;
}

h2 {
  margin: 80px 0 41px;
  color: #00204e;
  font-size: 56px;
  font-weight: 400;
  line-height: 67px;
  letter-spacing: 0.250px;
}

.search-box {
  padding: 40px;
  height: 900px;
  border: 4px solid #00204e;
  border-radius: 40px;
}

.line {
  height: 48px;
}

.restrict {
  letter-spacing: 0.400px;
}

.pick {
  display: inline-block;
  position: relative;
  height: 46px;
  vertical-align: top;
}

select {
  display: block;
  height: 46px;
  box-sizing: border-box;
  padding: 2px 0 0 10px;
  border: 0;
  border-radius: 10px;
  background: #f5f5dc;
  color: #000;
  font: 32px "DejaVu Sans", Verdana, sans-serif;
  appearance: none;
}

.chev {
  position: absolute;
  top: 15px;
  right: 9px;
  width: 18px;
  height: 14px;
  fill: none;
  stroke: #111;
  stroke-width: 3;
}

.sel-year { width: 66px; }
.sel-wide { width: 1026px; }
.sel-campus { width: 250px; }
.sel-size { width: 85px; }

.terms-label {
  margin-top: 32px;
}

.terms {
  display: block;
  width: 408px;
  height: 60px;
  box-sizing: border-box;
  border: 0;
  border-radius: 10px;
  background: #f5f5dc;
}

.size-row {
  margin-top: 80px;
}

.scrollbar {
  width: 29px;
  flex: none;
  box-sizing: border-box;
  border-left: 2px solid #e8e8e8;
  border-right: 2px solid #ededed;
  background: #fafafa;
}

.thumb {
  display: block;
  width: 16px;
  height: 1438px;
  margin: 6px 0 0 5px;
  border-radius: 8px;
  background: #c2c2c2;
}

/* shadow the dock throws on the window */
.dock-shadow {
  position: absolute;
  left: 170px;
  right: 170px;
  bottom: -10px;
  height: 10px;
  box-shadow: 0 0 64px 16px rgba(90, 115, 130, 0.42);
}

/* dock */
.dock {
  width: 3062px;
  height: 157px;
  flex: none;
  display: flex;
  align-items: flex-start;
  gap: 34px;
  box-sizing: border-box;
  margin: 2px 0 0 148px;
  padding: 22px 0 0 20px;
  border: 3px solid rgba(170, 185, 215, 0.45);
  border-radius: 42px;
  background: linear-gradient(90deg, #6584ad 0%, #7a7dad 45%, #9273a8 75%, #a86f9f 100%);
}

.app {
  width: 102px;
  height: 103px;
  flex: none;
  position: relative;
  margin-top: -3px;
}

.app > svg {
  display: block;
  width: 100%;
  height: 100%;
}

.dot {
  position: absolute;
  top: 124px;
  left: 48px;
  width: 7px;
  height: 7px;
  border-radius: 50%;
  background: #0a0f45;
}

.badge {
  position: absolute;
  top: -12px;
  right: -16px;
  width: 46px;
  height: 46px;
  border-radius: 50%;
  background: #e2524a;
  color: #fff;
  font: 26px/46px Inter, "Liberation Sans", sans-serif;
  text-align: center;
}

.app-go > svg {
  width: 122px;
  height: 122px;
  margin: -9px 0 0 -11px;
}

.app-doc {
  width: 82px;
  margin-left: 17px;
}

.app-doc > svg {
  height: 118px;
  margin-top: -7px;
}

.app-diff {
  width: 82px;
  margin-left: 22px;
}

.app-diff > svg {
  height: 80px;
  margin-top: 10px;
}

.app-bin {
  width: 90px;
  margin-left: 16px;
}

.app-bin > svg {
  height: 118px;
  margin-top: -12px;
}

.dock-sep {
  width: 2px;
  height: 118px;
  flex: none;
  margin: -3px 0 0 14px;
  background: #6f5a94;
}

.cal-month {
  font: 700 23px Inter, "Liberation Sans", sans-serif;
  text-anchor: middle;
  fill: #fff;
}

.cal-day {
  font: 300 62px Inter, "Liberation Sans", sans-serif;
  text-anchor: middle;
  fill: #222;
}

.ms-letter {
  font: 700 26px "Liberation Sans", sans-serif;
  text-anchor: middle;
  fill: #fff;
}

.tv-word {
  font: 700 44px "Liberation Sans", sans-serif;
  text-anchor: middle;
  fill: #fff;
}

.go-word {
  font: 700 45px "Liberation Sans", sans-serif;
  text-anchor: middle;
  fill: #fff;
}

/* file name on the desktop, cut off by the screen edge */
.desk-file {
  position: absolute;
  left: 3313px;
  top: 2016px;
  color: #fff;
  font: 700 26px/38px "Liberation Sans", sans-serif;
  text-shadow: 0 1px 3px rgba(0, 0, 0, 0.7);
}
```
